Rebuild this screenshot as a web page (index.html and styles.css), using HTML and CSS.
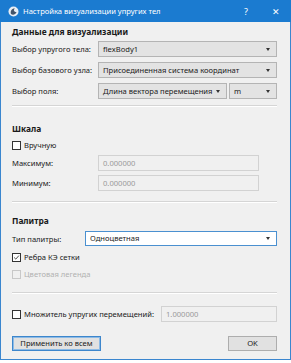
FILE: index.html
```html
<!DOCTYPE html>
<html lang="ru">
<head>
    <meta charset="UTF-8">
    <meta name="viewport" content="width=device-width, initial-scale=1.0">
    <title>Настройка визуализации упругих тел</title>
    <link rel="stylesheet" href="styles.css">
</head>
<body>
    <div class="window">
        <div class="titlebar">
            <svg class="app-icon" width="11" height="11" viewBox="0 0 11 11">
                <circle cx="5.5" cy="5.5" r="5" fill="#e8eef5"/>
                <path d="M3 8 C2 5 4 2 7 2.5 C5 4 6 6 8.5 6 C7.5 8.5 5 9.5 3 8 Z" fill="#44556a"/>
            </svg>
            <span class="title">Настройка визуализации упругих тел</span>
            <span class="title-btn help">?</span>
            <span class="title-btn close">✕</span>
        </div>

        <div class="content">
            <div class="section-title first">Данные для визуализации</div>
            <div class="form-grid">
                <label>Выбор упругого тела:</label>
                <div class="combo">flexBody1</div>
                <label>Выбор базового узла:</label>
                <div class="combo">Присоединенная система координат</div>
                <label>Выбор поля:</label>
                <div class="combo-pair">
                    <div class="combo">Длина вектора перемещения</div>
                    <div class="combo">m</div>
                </div>
            </div>

            <hr class="sep sep-1">

            <div class="section-title">Шкала</div>
            <div class="check-row"><span class="box"></span>Вручную</div>
            <div class="scale-grid">
                <label>Максимум:</label>
                <div class="field disabled">0.000000</div>
                <label>Минимум:</label>
                <div class="field disabled">0.000000</div>
            </div>

            <hr class="sep sep-2">

            <div class="section-title tight">Палитра</div>
            <div class="palette-row">
                <label>Тип палитры:</label>
                <div class="combo focused">Одноцветная</div>
            </div>
            <div class="check-row"><span class="box checked">
                <svg width="9" height="9" viewBox="0 0 9 9"><path d="M1.5 4.5 L3.6 6.6 L7.6 2" fill="none" stroke="#333" stroke-width="1.1"/></svg>
            </span>Ребра КЭ сетки</div>
            <div class="check-row muted"><span class="box"></span>Цветовая легенда</div>

            <hr class="sep sep-3">

            <div class="mult-row">
                <div class="check-row"><span class="box"></span>Множитель упругих перемещений:</div>
                <div class="field disabled">1.000000</div>
            </div>

            <div class="buttons">
                <button class="default">Применить ко всем</button>
                <button class="ok">OK</button>
            </div>
        </div>
    </div>
</body>
</html>
```

FILE: styles.css
```css
body {
    margin: 0;
    padding: 0;
    background-color: #ffffff;
    font-family: "Noto Sans", "Open Sans", sans-serif;
    font-size: 7.6px;
    color: #1a1a1a;
}
.window {
    width: 291px;
    height: 360px;
    box-sizing: border-box;
    border: 1px solid #3a86cf;
    border-top: none;
    background-color: #f0f0f0;
}
.titlebar {
    height: 22px;
    margin: 0 -1px;
    background-color: #1b7bd0;
    color: #fff;
    display: flex;
    align-items: center;
    padding: 0 0 0 8px;
}
.app-icon {
    margin-right: 4px;
}
.title {
    flex: 1;
    font-size: 7.6px;
}
.title-btn {
    width: 30px;
    text-align: center;
    font-size: 9px;
}
.content {
    padding: 4px 13px 0 11px;
}
.section-title {
    font-weight: bold;
    font-size: 8.4px;
    line-height: 12px;
    margin-top: 16px;
}
.section-title.first {
    margin-top: 0;
}
.section-title.tight {
    margin-top: 12px;
}
label {
    line-height: 16px;
    white-space: nowrap;
}
.form-grid {
    display: grid;
    grid-template-columns: 86px 1fr;
    row-gap: 5px;
    margin-top: 3px;
}
.combo {
    position: relative;
    height: 16px;
    line-height: 14px;
    box-sizing: border-box;
    border: 1px solid #b4b4b4;
    background-color: #e3e3e3;
    padding-left: 4px;
    white-space: nowrap;
    overflow: hidden;
}
.combo::after {
    content: "";
    position: absolute;
    right: 6px;
    top: 6px;
    border-left: 2.5px solid transparent;
    border-right: 2.5px solid transparent;
    border-top: 3px solid #333;
}
.combo.focused {
    background-color: #fff;
    border-color: #4a90d0;
}
.combo-pair {
    display: grid;
    grid-template-columns: 1fr 48px;
    column-gap: 2px;
}
.sep {
    border: none;
    border-top: 1px solid #d5d5d5;
    border-bottom: 1px solid #fff;
    margin: 0;
}
.sep-1 {
    margin-top: 6px;
}
.sep-2 {
    margin-top: 10px;
}
.sep-3 {
    margin-top: 12px;
}
.check-row {
    display: flex;
    align-items: center;
    line-height: 12px;
    margin-top: 4px;
    white-space: nowrap;
}
.check-row.muted {
    color: #b0b0b0;
    margin-top: 5px;
}
.box {
    width: 9px;
    height: 9px;
    box-sizing: border-box;
    border: 1px solid #333;
    background-color: #fff;
    margin-right: 3px;
    display: flex;
    align-items: center;
    justify-content: center;
}
.box svg {
    display: block;
}
.muted .box {
    border-color: #c8c8c8;
    background-color: #f0f0f0;
}
.scale-grid {
    display: grid;
    grid-template-columns: 86px 161px;
    row-gap: 4px;
    margin-top: 4px;
}
.field {
    height: 16px;
    line-height: 14px;
    box-sizing: border-box;
    border: 1px solid #d2d2d2;
    background-color: #f0f0f0;
    padding-left: 4px;
}
.field.disabled {
    color: #9a9a9a;
}
.palette-row {
    display: grid;
    grid-template-columns: 73px 1fr;
    margin-top: 4px;
}
.palette-row .combo {
    height: 15px;
    line-height: 13px;
}
.palette-row .combo::after {
    top: 5px;
}
.mult-row {
    display: grid;
    grid-template-columns: 149px 1fr;
    align-items: center;
    margin-top: 12px;
}
.mult-row .check-row {
    margin-top: 0;
}
.buttons {
    display: flex;
    justify-content: space-between;
    margin-top: 14px;
}
button {
    height: 15px;
    box-sizing: border-box;
    border: 1px solid #adadad;
    background-color: #e1e1e1;
    font-family: inherit;
    font-size: 7.6px;
    color: #1a1a1a;
    padding: 0;
    line-height: 13px;
}
button.default {
    width: 89px;
    border: 1px solid #3d86cc;
    box-shadow: inset 0 0 0 1px #8dbbe6;
}
button.ok {
    width: 49px;
}
```
